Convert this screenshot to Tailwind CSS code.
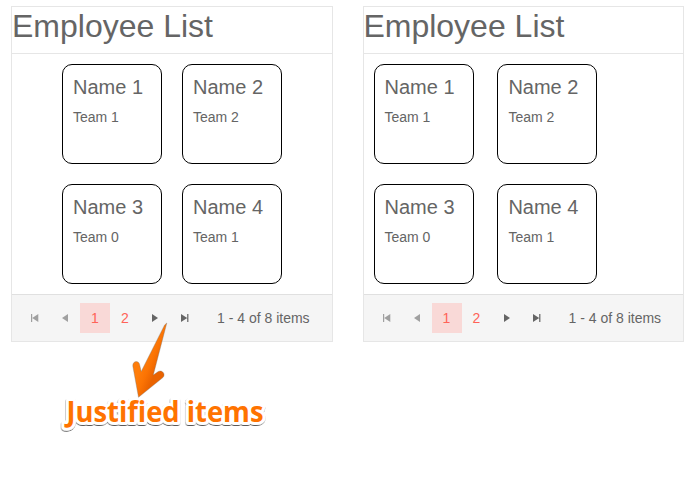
<!DOCTYPE html>
<html lang="en">
<head>
<meta charset="utf-8">
<title>Employee List</title>
<script src="https://cdn.jsdelivr.net/npm/@tailwindcss/browser@4"></script>
</head>
<body class="bg-white text-[#656565] font-['Liberation_Sans',Arial,sans-serif] text-sm">
<svg class="hidden">
  <symbol id="prev" viewBox="0 0 16 16"><path d="M11 4v8L5 8z"/></symbol>
  <symbol id="first" viewBox="0 0 16 16"><path d="M4 4h1.2v8H4zM11.3 4v8L5.2 8z"/></symbol>
  <symbol id="next" viewBox="0 0 16 16"><path d="M5 4v8l6-4z"/></symbol>
  <symbol id="last" viewBox="0 0 16 16"><path d="M10.2 4h1.2v8h-1.2zM4 4v8l6.2-4z"/></symbol>
</svg>
<main class="relative w-[690px] h-[480px] overflow-hidden flex items-start gap-[30px] pl-[11px] pt-[6px]">
  <section class="w-[322px] h-[336px] shrink-0 border border-[#e6e6e6] flex flex-col">
    <h1 class="h-[47px] shrink-0 border-b border-[#e6e6e6] text-[32px] leading-[38px]">Employee List</h1>
    <div class="grid grid-cols-[100px_100px] content-start justify-center gap-5 pt-[10px] h-[240px]">
      <article class="size-[100px] border border-black rounded-[10px] px-[10px] pt-[10px]"><h2 class="text-xl leading-6">Name 1</h2><p class="mt-2 leading-5">Team 1</p></article>
      <article class="size-[100px] border border-black rounded-[10px] px-[10px] pt-[10px]"><h2 class="text-xl leading-6">Name 2</h2><p class="mt-2 leading-5">Team 2</p></article>
      <article class="size-[100px] border border-black rounded-[10px] px-[10px] pt-[10px]"><h2 class="text-xl leading-6">Name 3</h2><p class="mt-2 leading-5">Team 0</p></article>
      <article class="size-[100px] border border-black rounded-[10px] px-[10px] pt-[10px]"><h2 class="text-xl leading-6">Name 4</h2><p class="mt-2 leading-5">Team 1</p></article>
    </div>
    <nav class="flex-1 flex items-center border-t border-[#e0e0e0] bg-[#f5f5f5] pl-2">
      <span class="size-[30px] flex items-center justify-center text-[#a0a0a0]"><svg class="size-4 fill-current"><use href="#first"/></svg></span>
      <span class="size-[30px] flex items-center justify-center text-[#a0a0a0]"><svg class="size-4 fill-current"><use href="#prev"/></svg></span>
      <span class="size-[30px] flex items-center justify-center bg-[#f9d9d7] text-[#ff6358]">1</span>
      <span class="size-[30px] flex items-center justify-center text-[#ff6358]">2</span>
      <span class="size-[30px] flex items-center justify-center"><svg class="size-4 fill-current"><use href="#next"/></svg></span>
      <span class="size-[30px] flex items-center justify-center"><svg class="size-4 fill-current"><use href="#last"/></svg></span>
      <span class="ml-[17px]">1 - 4 of 8 items</span>
    </nav>
  </section>
  <section class="w-[321px] h-[336px] shrink-0 border border-[#e6e6e6] flex flex-col">
    <h1 class="h-[47px] shrink-0 border-b border-[#e6e6e6] text-[32px] leading-[38px] -indent-[0.6px]">Employee List</h1>
    <div class="grid grid-cols-[100px_100px] content-start gap-x-[23px] gap-y-5 pt-[10px] pl-[10px] h-[240px]">
      <article class="size-[100px] border border-black rounded-[10px] pl-[9.5px] pt-[10px]"><h2 class="text-xl leading-6">Name 1</h2><p class="mt-2 leading-5">Team 1</p></article>
      <article class="size-[100px] border border-black rounded-[10px] pl-[10.4px] pt-[10px]"><h2 class="text-xl leading-6">Name 2</h2><p class="mt-2 leading-5">Team 2</p></article>
      <article class="size-[100px] border border-black rounded-[10px] pl-[9.5px] pt-[10px]"><h2 class="text-xl leading-6">Name 3</h2><p class="mt-2 leading-5">Team 0</p></article>
      <article class="size-[100px] border border-black rounded-[10px] pl-[10.4px] pt-[10px]"><h2 class="text-xl leading-6">Name 4</h2><p class="mt-2 leading-5">Team 1</p></article>
    </div>
    <nav class="flex-1 flex items-center border-t border-[#e0e0e0] bg-[#f5f5f5] pl-[7.5px]">
      <span class="size-[30px] flex items-center justify-center text-[#a0a0a0]"><svg class="size-4 fill-current"><use href="#first"/></svg></span>
      <span class="size-[30px] flex items-center justify-center text-[#a0a0a0]"><svg class="size-4 fill-current"><use href="#prev"/></svg></span>
      <span class="size-[30px] flex items-center justify-center bg-[#f9d9d7] text-[#ff6358]">1</span>
      <span class="size-[30px] flex items-center justify-center text-[#ff6358]">2</span>
      <span class="size-[30px] flex items-center justify-center"><svg class="size-4 fill-current"><use href="#next"/></svg></span>
      <span class="size-[30px] flex items-center justify-center"><svg class="size-4 fill-current"><use href="#last"/></svg></span>
      <span class="ml-[17px]">1 - 4 of 8 items</span>
    </nav>
  </section>

  <!-- Callout: label and arrow over the first list -->
  <svg class="absolute left-0 top-0 pointer-events-none" width="300" height="480" viewBox="0 0 300 480">
    <defs>
      <linearGradient id="arrow" gradientUnits="userSpaceOnUse" x1="143" y1="362" x2="157" y2="368">
        <stop offset="0" stop-color="#ff7d0a"/><stop offset=".5" stop-color="#fb7303"/><stop offset="1" stop-color="#ea6300"/>
      </linearGradient>
      <filter id="shade" x="-10%" y="-30%" width="120%" height="160%"><feDropShadow dx="-0.3" dy="1" stdDeviation=".5" flood-color="#000" flood-opacity=".65"/></filter>
    </defs>
    <g filter="url(#shade)"><text x="66.5" y="421.5" class="font-['Open_Sans','Noto_Sans',sans-serif] font-bold text-[28px]" textLength="197" lengthAdjust="spacingAndGlyphs" fill="#fff" stroke="#fff" stroke-width="6" stroke-linejoin="round">Justified items</text></g>
    <text x="66.5" y="421.5" class="font-['Open_Sans','Noto_Sans',sans-serif] font-bold text-[28px]" textLength="197" lengthAdjust="spacingAndGlyphs" fill="#ff7300">Justified items</text>
    <path d="M166.8 323L153.3 375L158.2 371.6C161.5 369.6 165.2 373.2 163.8 376.2Q163.4 377.3 162 378.3L138.5 397.3L132.8 366C132.4 360.8 138.8 360 139.6 364.6L141.2 371.5L164.6 325Z" fill="url(#arrow)" stroke="#777" stroke-opacity=".6" stroke-width=".6"/>
  </svg>
</main>
</body>
</html>
